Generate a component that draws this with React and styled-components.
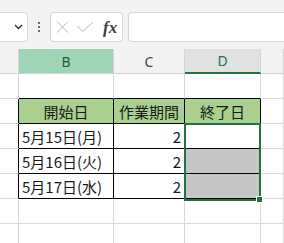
import React from 'react';
import styled, { createGlobalStyle } from 'styled-components';

const GlobalStyle = createGlobalStyle`
  html, body {
    margin: 0;
    padding: 0;
    background: #ffffff;
    overflow: hidden;
  }
`;

const StyledSheet = styled.div`
  width: 284px;
  height: 243px;
  overflow: hidden;
  background: #ffffff;
  font-family: 'Noto Sans', 'Noto Sans CJK JP', sans-serif;
`;

const StyledToolbar = styled.div`
  height: 49px;
  box-sizing: border-box;
  padding-top: 12px;
  background: #f3f3f3;
  display: flex;
  align-items: flex-start;
`;

const StyledNameBox = styled.div`
  margin-left: -8px;
  width: 36px;
  height: 30px;
  box-sizing: border-box;
  border: 1px solid #d6d6d6;
  border-radius: 4px;
  background: #ffffff;
  display: flex;
  align-items: center;
  justify-content: flex-end;
  padding-right: 4px;
`;

const StyledDots = styled.div`
  width: 22px;
  height: 30px;
  display: flex;
  flex-direction: column;
  align-items: center;
  justify-content: center;
  gap: 2px;
`;

const StyledDot = styled.span`
  width: 2px;
  height: 2px;
  background: #404040;
  border-radius: 1px;
`;

const StyledFormulaButtons = styled.div`
  width: 73px;
  height: 30px;
  box-sizing: border-box;
  border: 1px solid #d6d6d6;
  border-radius: 4px;
  background: #ffffff;
  display: flex;
  align-items: center;
  padding-left: 5px;
  gap: 8px;
`;

const StyledFx = styled.span`
  font-family: 'Liberation Serif', serif;
  font-style: italic;
  font-weight: bold;
  font-size: 17px;
  color: #404040;
  margin-left: 2px;
  line-height: 1;
`;

const StyledFormulaInput = styled.div`
  margin-left: 5px;
  flex: 1;
  height: 30px;
  box-sizing: border-box;
  border: 1px solid #d6d6d6;
  border-right: none;
  border-radius: 4px 0 0 4px;
  background: #ffffff;
`;

const StyledGrid = styled.div`
  position: relative;
  display: grid;
  grid-template-columns: 19px 95px 71px 76px 1fr;
  grid-template-rows: 25px repeat(7, 25px);
`;

const StyledColHeader = styled.div`
  box-sizing: border-box;
  border-right: 1px solid #d4d4d4;
  border-bottom: ${(p) => (p.$active ? '2px solid #217346' : '1px solid #d4d4d4')};
  background: ${(p) => p.$bg || '#f3f3f3'};
  color: ${(p) => p.$color || '#444444'};
  font-size: 14px;
  display: flex;
  align-items: center;
  justify-content: center;
`;

const StyledCell = styled.div`
  box-sizing: border-box;
  border-right: 1px solid ${(p) => (p.$br ? '#000000' : '#d9d9d9')};
  border-bottom: 1px solid ${(p) => (p.$bb ? '#000000' : '#d9d9d9')};
  background: ${(p) => p.$bg || '#ffffff'};
  font-family: 'Noto Sans CJK JP', sans-serif;
  font-size: 15px;
  color: #1a1a1a;
  display: flex;
  align-items: center;
  justify-content: ${(p) => p.$align || 'flex-start'};
  padding: 0 3px;
  white-space: nowrap;
  overflow: hidden;
`;

const StyledSelection = styled.div`
  position: absolute;
  left: 184px;
  top: 74px;
  width: 77px;
  height: 78px;
  box-sizing: border-box;
  border: 2px solid #217346;
  pointer-events: none;
`;

const StyledFillHandle = styled.div`
  position: absolute;
  right: -4px;
  bottom: -4px;
  width: 5px;
  height: 5px;
  background: #217346;
  border: 1px solid #ffffff;
`;

const HEAD_GREEN = '#a9d08e';
const SEL_GRAY = '#c6c6c6';

const rows = [
  { date: '5月15日(月)', days: '2', bg: '#ffffff' },
  { date: '5月16日(火)', days: '2', bg: SEL_GRAY },
  { date: '5月17日(水)', days: '2', bg: SEL_GRAY },
];

const App = () => (
  <StyledSheet>
    <GlobalStyle />
    <StyledToolbar>
      <StyledNameBox>
        <svg width="9" height="6" viewBox="0 0 9 6">
          <path d="M1 1 L4.5 4.5 L8 1" fill="none" stroke="#303030" strokeWidth="1.4" />
        </svg>
      </StyledNameBox>
      <StyledDots>
        <StyledDot />
        <StyledDot />
        <StyledDot />
      </StyledDots>
      <StyledFormulaButtons>
        <svg width="13" height="12" viewBox="0 0 13 12">
          <path d="M1 0.5 L12 11.5 M12 0.5 L1 11.5" stroke="#b8b8b8" strokeWidth="1" fill="none" />
        </svg>
        <svg width="16" height="10" viewBox="0 0 16 10">
          <path d="M0.5 4 L5.5 9.5 L15.5 0.5" stroke="#b8b8b8" strokeWidth="1" fill="none" />
        </svg>
        <StyledFx>fx</StyledFx>
      </StyledFormulaButtons>
      <StyledFormulaInput />
    </StyledToolbar>
    <StyledGrid>
      <StyledColHeader />
      <StyledColHeader $bg="#9fd5b7" $color="#1f5a38">B</StyledColHeader>
      <StyledColHeader>C</StyledColHeader>
      <StyledColHeader $bg="#e1e1e1" $color="#217346" $active>D</StyledColHeader>
      <StyledColHeader />

      <StyledCell />
      <StyledCell $bb />
      <StyledCell $bb />
      <StyledCell $bb />
      <StyledCell />

      <StyledCell $br />
      <StyledCell $bg={HEAD_GREEN} $br $bb $align="center">開始日</StyledCell>
      <StyledCell $bg={HEAD_GREEN} $br $bb $align="center">作業期間</StyledCell>
      <StyledCell $bg={HEAD_GREEN} $br $bb $align="center">終了日</StyledCell>
      <StyledCell />

      {rows.map((r) => (
        <React.Fragment key={r.date}>
          <StyledCell $br />
          <StyledCell $br $bb>{r.date}</StyledCell>
          <StyledCell $br $bb $align="flex-end">{r.days}</StyledCell>
          <StyledCell $br $bb $bg={r.bg} />
          <StyledCell />
        </React.Fragment>
      ))}

      {[0, 1, 2].map((i) => (
        <React.Fragment key={i}>
          <StyledCell />
          <StyledCell />
          <StyledCell />
          <StyledCell />
          <StyledCell />
        </React.Fragment>
      ))}

      <StyledSelection>
        <StyledFillHandle />
      </StyledSelection>
    </StyledGrid>
  </StyledSheet>
);

export default App;
